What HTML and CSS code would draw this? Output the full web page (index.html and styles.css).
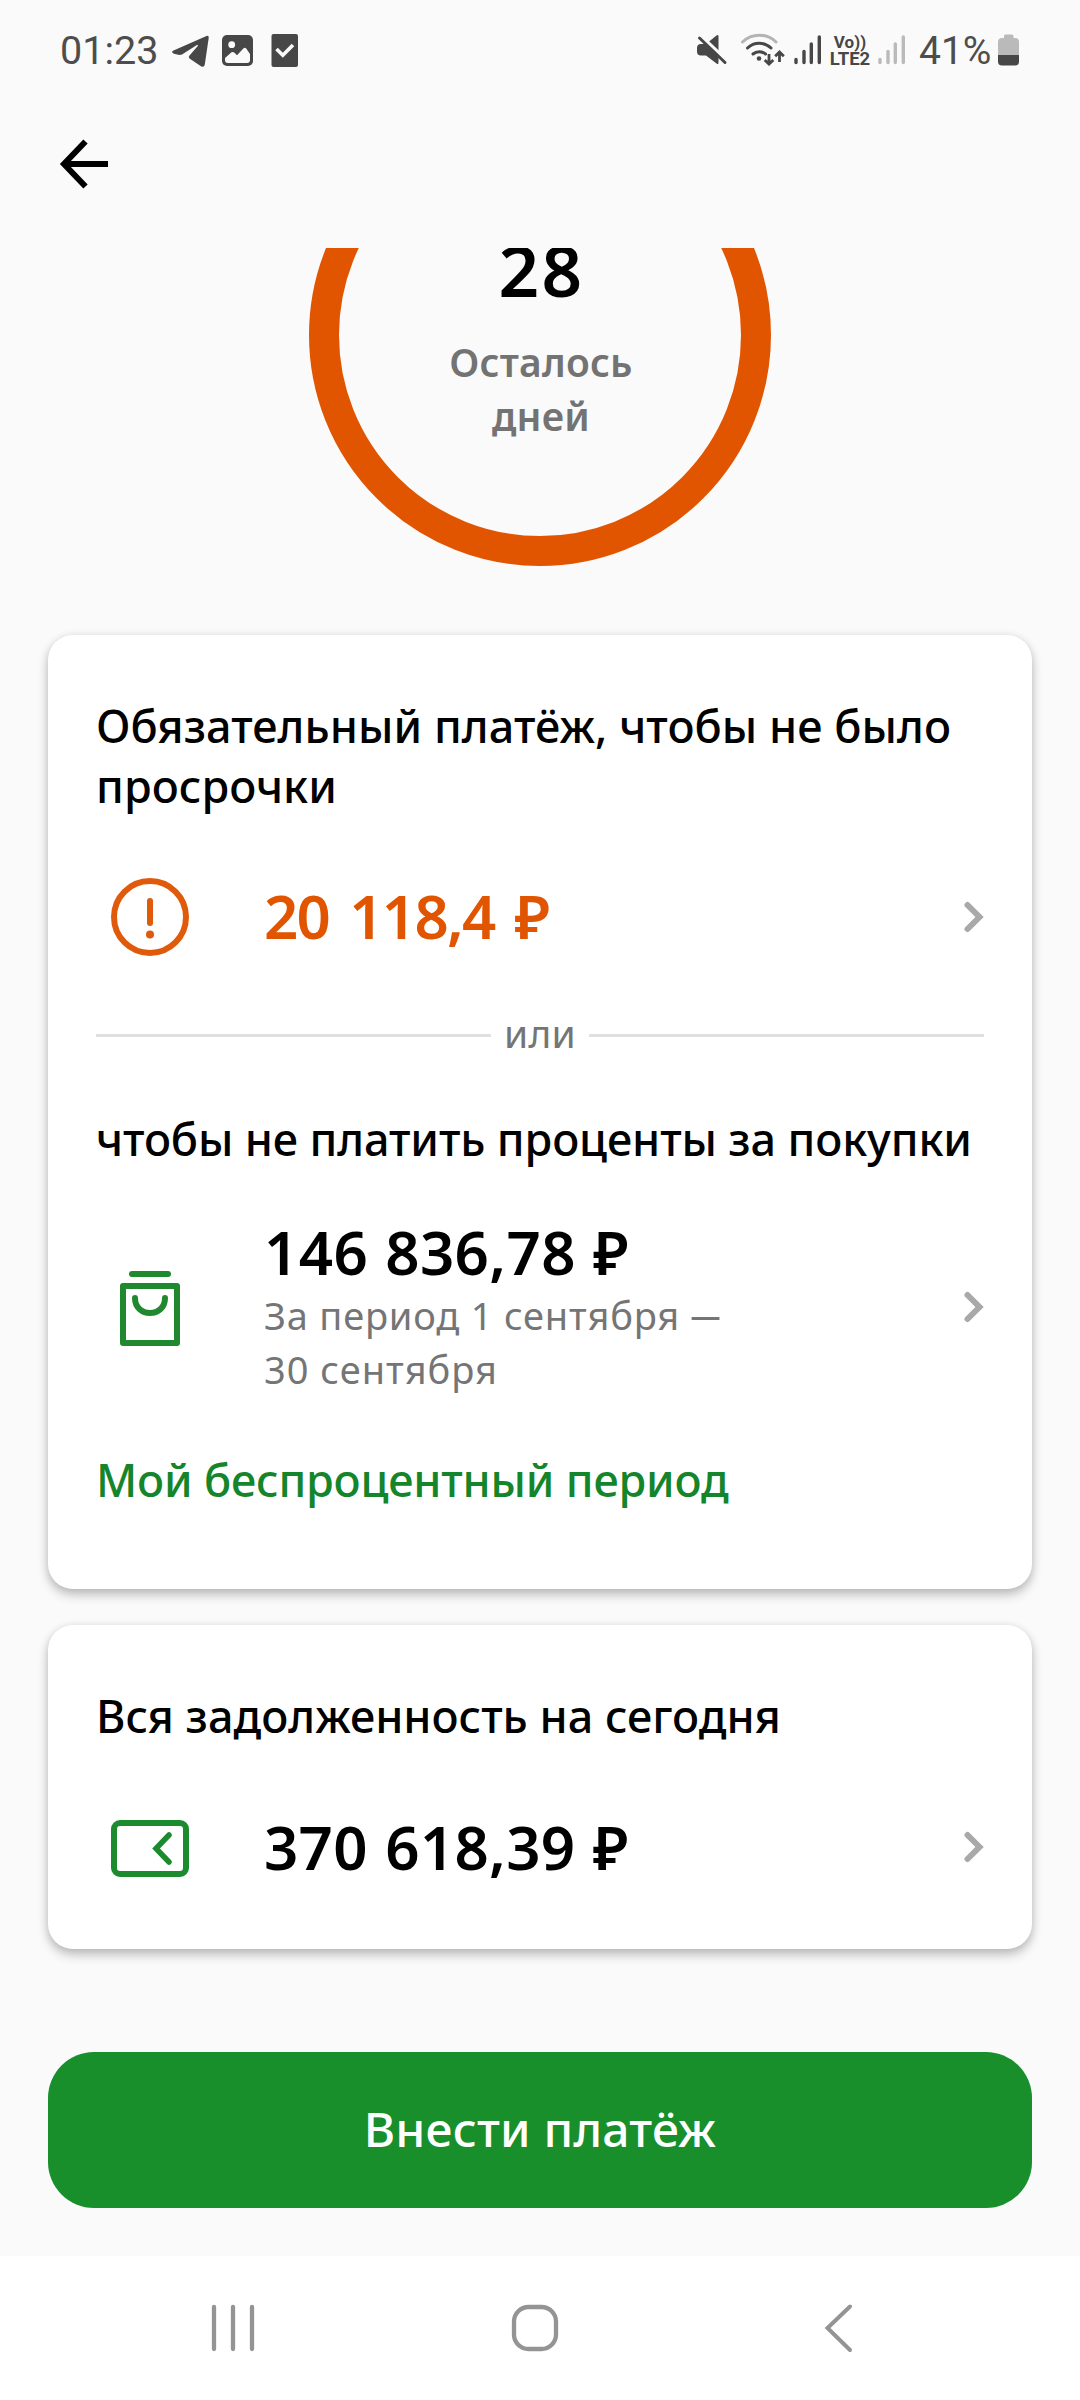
FILE: index.html
```
<!DOCTYPE html>
<html lang="ru">
<head>
<meta charset="utf-8">
<title>Платёж по карте</title>
<link rel="stylesheet" href="styles.css">
</head>
<body>
<div class="screen">
  <header class="status">
    <span class="status-text time">01:23</span>
    <svg class="status-icons" width="140" height="40" viewBox="160 30 140 40">
      <path d="M173.500 50.500L206.500 36Q209 35.200 208.700 38L204.800 64.500Q204 68 201 66.300L189.500 58.500Q188 57 189.500 55.500L198 45.800Q198.300 44.300 196.500 45.300L182 54.500Q179.500 55.600 174 53.800Q170.500 52 173.500 50.500Z" fill="#474747"/>
      <rect x="222" y="35" width="31" height="31" rx="5" fill="#474747"/>
      <circle cx="231.700" cy="44.700" r="3.400" fill="#fafafa"/>
      <path d="M225 58L231.500 52.300Q233 51.400 234.200 52.600L237 55.200L243.600 48.300Q245 47.200 246.200 48.500L250 54V60Q250 63 247 63H228Q225 63 225 60Z" fill="#fafafa"/>
      <rect x="271.500" y="34" width="26.500" height="33" rx="2" fill="#474747"/>
      <path d="M276.500 49L282.800 55.300L293 45" fill="none" stroke="#fafafa" stroke-width="3.600"/>
    </svg>
    <div class="status-right">
      <svg class="connectivity" width="128" height="40" viewBox="695 30 128 40">
        <path d="M701 44H706L716.500 35.500Q718.500 34.300 718.500 36.500V62.500Q718.500 65 716.500 63.500L706 55.500H701Q697 55.500 697 51.500V48Q697 44 701 44Z" fill="#474747"/>
        <path d="M701 36L728 61.500" stroke="#fafafa" stroke-width="3.500"/>
        <path d="M699.500 38L725 62.500" stroke="#474747" stroke-width="3" stroke-linecap="round"/>
        <g fill="none" stroke-width="3" stroke-linecap="round">
          <path d="M742.500 42A24 24 0 0 1 776 42" stroke="#b4b4b4"/>
          <path d="M747.500 48A17 17 0 0 1 771 48" stroke="#474747"/>
          <path d="M753 54A9.500 9.500 0 0 1 765.500 54" stroke="#474747"/>
          <path d="M769 54V64M764.700 60L769 64L773.300 60M779.500 62V52M775.200 56.300L779.500 52L783.800 56.300" stroke="#474747" stroke-width="2.800" stroke-linecap="butt"/>
        </g>
        <circle cx="759" cy="58.500" r="2.300" fill="#474747"/>
        <path d="M796 59.500V62.500M804 51.500V62.500M811.300 44V62.500M819.300 37V62.500" stroke="#474747" stroke-width="3.400" stroke-linecap="round"/>
      </svg>
      <span class="volte"><span>Vo))</span><span class="lte">LTE2</span></span>
      <svg width="30" height="40" viewBox="877 30 30 40">
        <path d="M880 59.500V62.500M888 51.500V62.500M895.300 44V62.500M903.300 37V62.500" stroke="#bababa" stroke-width="3.400" stroke-linecap="round"/>
      </svg>
      <span class="status-text battery-level">41%</span>
      <svg width="23" height="40" viewBox="997 30 23 40">
        <path d="M1004 38V36Q1004 34.500 1005.500 34.500H1012Q1013.500 34.500 1013.500 36V38H1015Q1019 38 1019 42V56H998V42Q998 38 1002 38Z" fill="#bababa"/>
        <path d="M998 55H1019V61.500Q1019 65.500 1015 65.500H1002Q998 65.500 998 61.500Z" fill="#474747"/>
      </svg>
    </div>
  </header>

  <nav class="appbar">
    <svg width="52" height="52" viewBox="0 0 52 52"><path d="M27.500 3.500L6 26L27.500 48.500M6 26H50" fill="none" stroke="#000" stroke-width="6"/></svg>
  </nav>

  <main class="content">
    <section class="countdown">
      <div class="ring">
        <div class="days">28</div>
        <div class="days-label"><span class="label-line">Осталось</span><span class="label-line">дней</span></div>
      </div>
    </section>

    <section class="card card-payment">
      <h2 class="title title-due">Обязательный платёж, чтобы не было просрочки</h2>
      <div class="row row-due">
        <svg class="icon" width="84" height="84" viewBox="0 0 84 84" fill="none" stroke="#e05a0c" stroke-width="6" stroke-linecap="round"><circle cx="42" cy="42" r="36"/><path d="M42 26V48"/><circle cx="42" cy="59.500" r="4" fill="#e05a0c" stroke="none"/></svg>
        <div class="amount amount-due">20 118,4 ₽</div>
        <svg class="chevron" width="22" height="36" viewBox="0 0 22 36"><path d="M5.500 6L17.500 18L5.500 30" fill="none" stroke="#a9a9a9" stroke-width="6" stroke-linecap="round"/></svg>
      </div>
      <div class="divider"><span>или</span></div>
      <h2 class="title title-interest">чтобы не платить проценты за покупки</h2>
      <div class="row row-interest">
        <svg class="icon" width="84" height="84" viewBox="0 0 84 84" fill="none" stroke="#20892f" stroke-width="6" stroke-linecap="round" stroke-linejoin="round"><path d="M24 10H60M15 22H69V79H15ZM27 34C27 54 57 54 57 34"/></svg>
        <div class="details">
          <div class="amount amount-interest">146 836,78 ₽</div>
          <div class="period"><span class="period-from">За период 1 сентября <span class="dash">—</span></span><span class="period-to">30 сентября</span></div>
        </div>
        <svg class="chevron" width="22" height="36" viewBox="0 0 22 36"><path d="M5.500 7L17.500 19L5.500 31" fill="none" stroke="#a9a9a9" stroke-width="6" stroke-linecap="round"/></svg>
      </div>
      <a class="link">Мой беспроцентный период</a>
    </section>

    <section class="card card-debt">
      <h2 class="title">Вся задолженность на сегодня</h2>
      <div class="row row-debt">
        <svg class="icon" width="84" height="84" viewBox="0 0 84 84" fill="none" stroke="#1c8b2e" stroke-width="6" stroke-linecap="round"><rect x="6" y="17" width="72" height="51" rx="6"/><path d="M61 29L48 42.500L61 56" stroke-width="5.500"/></svg>
        <div class="amount amount-debt">370 618,39 ₽</div>
        <svg class="chevron" width="22" height="36" viewBox="0 0 22 36"><path d="M5.500 5L17.500 17L5.500 29" fill="none" stroke="#a9a9a9" stroke-width="6" stroke-linecap="round"/></svg>
      </div>
    </section>

    <button class="pay" type="button">Внести платёж</button>
  </main>

  <footer class="navbar">
    <svg width="46" height="52" viewBox="0 0 46 52"><path d="M4 5V47M23 5V47M42 5V47" stroke="#949494" stroke-width="4.300" stroke-linecap="round"/></svg>
    <svg class="home" width="52" height="52" viewBox="0 0 52 52"><rect x="5" y="5" width="42" height="42" rx="14.500" fill="none" stroke="#949494" stroke-width="4.300"/></svg>
    <svg class="back" width="34" height="52" viewBox="0 0 34 52"><path d="M29 4.500L6.500 26L29 48" fill="none" stroke="#949494" stroke-width="4" stroke-linecap="round"/></svg>
  </footer>
</div>
</body>
</html>
```
FILE: styles.css
```
* {
  box-sizing: border-box;
}

body {
  margin: 0;
  background: #fafafa;
  color: #000;
  font-family: "Noto Sans", "Open Sans", sans-serif;
}

svg {
  display: block;
  flex: none;
}

.screen {
  width: 1080px;
  height: 2400px;
  display: flex;
  flex-direction: column;
  overflow: hidden;
}

/* System status bar */
.status {
  height: 100px;
  flex: none;
  display: flex;
  align-items: center;
  padding: 0 60px;
}

.status-text {
  padding-top: 2px;
  font: 400 39.500px/40px Roboto, sans-serif;
  color: #4d4d4d;
  white-space: nowrap;
}

.time {
  width: 100px;
}

.status-right {
  margin-left: auto;
  display: flex;
  align-items: center;
}

.volte {
  width: 42px;
  margin: 2px 6px 0;
  display: flex;
  flex-direction: column;
  align-items: center;
  color: #474747;
  font: 700 17px/17px Roboto, sans-serif;
}

.lte {
  font-size: 18.500px;
}

.battery-level {
  width: 77px;
  margin: 0 1px 0 12px;
  font-size: 39px;
}

/* Toolbar */
.appbar {
  height: 148px;
  flex: none;
  padding: 38px 58px 0;
}

.content {
  height: 2008px;
  flex: none;
  display: flex;
  flex-direction: column;
  padding: 0 48px;
}

/* Countdown ring, scrolled partly under the toolbar */
.countdown {
  height: 387px;
  flex: none;
  display: flex;
  justify-content: center;
  align-items: flex-end;
  padding-bottom: 69px;
  overflow: hidden;
}

.ring {
  width: 462px;
  height: 462px;
  flex: none;
  border: 30px solid #e15500;
  border-radius: 50%;
  padding-top: 81px;
  display: flex;
  flex-direction: column;
  align-items: center;
}

.days {
  padding-left: 3px;
  font-size: 71px;
  line-height: 110px;
  font-weight: 600;
  letter-spacing: 2.500px;
}

.days-label {
  margin-top: 10px;
  padding-left: 2px;
  display: flex;
  flex-direction: column;
  align-items: center;
  font-size: 39px;
  line-height: 54px;
  font-weight: 600;
  letter-spacing: 0.2px;
  color: #737373;
}

/* Cards */
.card {
  flex: none;
  display: flex;
  flex-direction: column;
  padding: 61px 48px 0;
  background: #fff;
  border-radius: 25px;
  box-shadow: 0 6px 11px rgba(0, 0, 0, 0.22), 0 1px 8px rgba(0, 0, 0, 0.1);
}

.card-payment {
  height: 954px;
}

.card-debt {
  height: 324px;
  margin-top: 36px;
}

.title {
  margin: 0;
  font-size: 45px;
  line-height: 60px;
  font-weight: 500;
  letter-spacing: 0;
}

.title-due {
  letter-spacing: 0.050px;
}

.title-interest {
  margin-top: 47px;
  letter-spacing: -0.130px;
  white-space: nowrap;
}

.row {
  display: flex;
  align-items: center;
}

.row-due {
  height: 84px;
  margin-top: 59px;
}

.row-interest {
  height: 178px;
  margin-top: 48px;
}

.row-debt {
  height: 84px;
  margin-top: 60px;
}

.icon {
  margin: 0 72px 0 12px;
}

.chevron {
  margin-left: auto;
}

.amount {
  font-size: 60px;
  line-height: 70px;
  font-weight: 600;
  white-space: nowrap;
}

.amount-due {
  padding-bottom: 2px;
  letter-spacing: -1.700px;
  word-spacing: 6px;
  color: #e15500;
}

.amount-interest {
  letter-spacing: 0.4px;
  word-spacing: 1px;
}

.amount-debt {
  padding-bottom: 3px;
  letter-spacing: 0.3px;
  word-spacing: 1.500px;
}

.period {
  padding-top: 1px;
  display: flex;
  flex-direction: column;
  font-size: 38px;
  line-height: 54px;
  color: #757575;
}

.period-from {
  height: 54px;
  letter-spacing: 0.8px;
}

.period-to {
  letter-spacing: 1px;
}

.dash {
  font-size: 30px;
  line-height: 20px;
  font-weight: 600;
  vertical-align: 3px;
}

.divider {
  height: 54px;
  margin-top: 49px;
  display: flex;
  align-items: center;
}

.divider::before,
.divider::after {
  content: "";
  flex: 1;
  height: 3px;
  background: #e0e0e0;
}

.divider span {
  width: 98px;
  padding-bottom: 4px;
  text-align: center;
  font-size: 39px;
  line-height: 54px;
  letter-spacing: 0.3px;
  color: #757575;
}

.link {
  margin-top: 55px;
  font-size: 45px;
  line-height: 60px;
  font-weight: 500;
  letter-spacing: -0.200px;
  color: #14852a;
}

.pay {
  height: 156px;
  flex: none;
  margin-top: 103px;
  padding: 0 0 3px;
  border: 0;
  border-radius: 46px;
  background: #188f2b;
  color: #fff;
  font: 500 48px/60px "Noto Sans", "Open Sans", sans-serif;
  letter-spacing: 0.2px;
}

/* System navigation bar */
.navbar {
  height: 144px;
  flex: none;
  display: flex;
  padding: 46px 0 0 210px;
  background: #fff;
}

.home {
  margin-left: 253px;
}

.back {
  margin-left: 260px;
}
```
